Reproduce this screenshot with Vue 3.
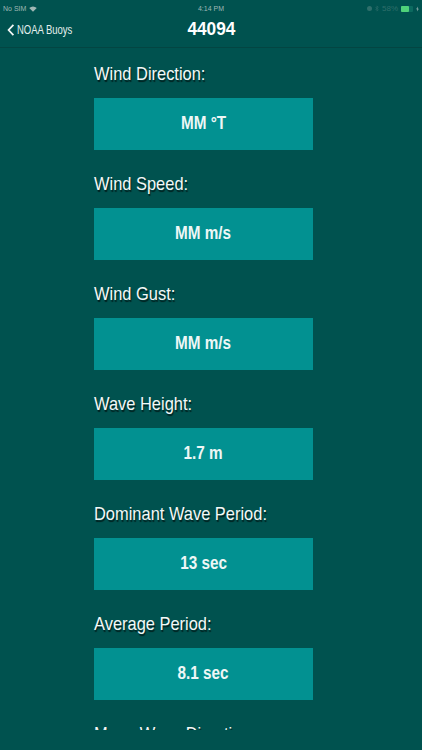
<template>
  <div class="screen">
    <div class="status-bar">
      <div class="status-left">
        <span>No SIM</span>
        <svg class="wifi" viewBox="0 0 12 9" width="8" height="6">
          <path d="M6 8.6 0.4 3a8 8 0 0 1 11.2 0z" fill="#9fb8b5" />
        </svg>
      </div>
      <span class="status-time">4:14 PM</span>
      <div class="status-right">
        <span class="lock"></span>
        <svg viewBox="0 0 6 10" width="4" height="7">
          <path d="M0.5 2.5 5 7 3 9V1l2 2-4.500 4.500" fill="none" stroke="#2f6f6b" stroke-width="0.9" />
        </svg>
        <span>58%</span>
        <span class="battery"><span class="battery-fill"></span></span>
        <svg viewBox="0 0 6 10" width="3" height="6">
          <path d="M3.500 0 0.500 5.500H2.800L2.300 10 5.500 4.300H3.200z" fill="#9fb8b5" />
        </svg>
      </div>
    </div>

    <div class="nav-bar">
      <div class="back">
        <svg viewBox="0 0 10 16" width="8" height="14">
          <path d="M8 1.500 2 8l6 6.500" fill="none" stroke="#f2f7f6" stroke-width="2.200" />
        </svg>
        <span class="back-text">NOAA Buoys</span>
      </div>
      <h1>44094</h1>
    </div>

    <div class="readings">
      <div v-for="item in readings" :key="item.label" class="reading">
        <div class="reading-label"><span>{{ item.label }}</span></div>
        <div class="reading-value"><span>{{ item.value }}</span></div>
      </div>
    </div>
  </div>
</template>

<script setup>
const readings = [
  { label: 'Wind Direction:', value: 'MM °T' },
  { label: 'Wind Speed:', value: 'MM m/s' },
  { label: 'Wind Gust:', value: 'MM m/s' },
  { label: 'Wave Height:', value: '1.7 m' },
  { label: 'Dominant Wave Period:', value: '13 sec' },
  { label: 'Average Period:', value: '8.1 sec' },
  { label: 'Mean Wave Direction:', value: 'MM °T' }
]
</script>

<style>
body { background: #00524f; }
</style>

<style scoped>
.screen { width: 422px; height: 750px; overflow: hidden; background: #00524f; font-family: "Liberation Sans", Arial, sans-serif; color: #fff; }
.status-bar { height: 17px; padding: 0 3px; display: flex; justify-content: space-between; align-items: center; position: relative; font-size: 7px; color: #9fb8b5; }
.status-left { display: flex; align-items: center; gap: 3px; }
.status-time { position: absolute; left: 0; right: 0; text-align: center; }
.status-right { display: flex; align-items: center; gap: 3px; color: #2f6f6b; font-size: 8px; }
.lock { width: 5px; height: 5px; border-radius: 50%; background: #2f6f6b; }
.battery { width: 12px; height: 6px; border-radius: 1px; background: #0c6a5f; display: block; }
.battery-fill { display: block; width: 8px; height: 6px; border-radius: 1px; background: #4ed27a; }
.nav-bar { box-sizing: border-box; height: 31px; padding-bottom: 6px; display: flex; align-items: center; justify-content: center; position: relative; border-bottom: 1px solid #034542; }
.nav-bar h1 { margin: 0; font-size: 19px; font-weight: 700; line-height: 24px; transform: scaleX(0.91); }
.back { position: absolute; left: 7px; top: 6px; display: flex; align-items: center; gap: 2px; font-size: 12px; color: #e4efed; }
.back-text { display: inline-block; transform: scaleX(0.79); transform-origin: left center; }
.readings { box-sizing: border-box; height: 682px; overflow: hidden; padding: 13px 0 0 94px; }
.reading { width: 219px; height: 110px; }
.reading-label { height: 37px; line-height: 26px; font-size: 19px; color: #f4f8f7; text-shadow: 1px 2px 1px rgba(0, 0, 0, 0.6); white-space: nowrap; }
.reading-label span { display: inline-block; transform: scaleX(0.865); transform-origin: left center; }
.reading-value { height: 52px; line-height: 51px; text-align: center; background: #029191; font-size: 18px; font-weight: 700; color: #eef7f6; }
.reading-value span { display: inline-block; transform: scaleX(0.85); }
</style>
